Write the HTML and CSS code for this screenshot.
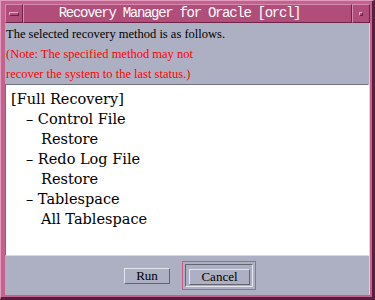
FILE: index.html
```html
<!DOCTYPE html>
<html lang="en">
<head>
  <meta charset="UTF-8">
  <title>Recovery Manager for Oracle [orcl]</title>
  <link rel="stylesheet" href="styles.css">
</head>
<body>
  <div class="window">
    <div class="title-bar">
      <div class="title-btn"><span class="menu-bar"></span></div>
      <div class="title-text">Recovery Manager for Oracle [orcl]</div>
      <div class="title-btn"><span class="max-dot"></span></div>
    </div>

    <div class="window-body">
      <div class="message">
        <p>The selected recovery method is as follows.</p>
        <p class="note">(Note: The specified method may not</p>
        <p class="note">recover the system to the last status.)</p>
      </div>

      <div class="method-panel">
        <div class="tree-line">[Full Recovery]</div>
        <div class="tree-line level-1">– Control File</div>
        <div class="tree-line level-2">Restore</div>
        <div class="tree-line level-1">– Redo Log File</div>
        <div class="tree-line level-2">Restore</div>
        <div class="tree-line level-1">– Tablespace</div>
        <div class="tree-line level-2">All Tablespace</div>
      </div>

      <div class="button-row">
        <button class="btn btn-run">Run</button>
        <div class="focus-ring">
          <div class="default-frame">
            <button class="btn btn-cancel">Cancel</button>
          </div>
        </div>
      </div>
    </div>
  </div>
</body>
</html>
```

FILE: styles.css
```css
* {
  box-sizing: border-box;
  margin: 0;
  padding: 0;
}

body {
  background: #adb0c2;
  font-family: 'Liberation Serif', serif;
}

.window {
  width: 375px;
  height: 300px;
  display: flex;
  flex-direction: column;
  background: #c4628f;
  border: 1px solid;
  border-color: #e29bbd #5a1f3f #5a1f3f #e29bbd;
  padding: 3px 2px 2px 4px;
  border-right-width: 3px;
  border-bottom-width: 3px;
}

/* title bar */
.title-bar {
  display: flex;
  height: 19px;
  background: #b04d79;
}

.title-btn {
  width: 18px;
  height: 19px;
  border: 1px solid;
  border-color: #d98ab0 #6e2448 #6e2448 #d98ab0;
  display: flex;
  align-items: center;
  justify-content: center;
}

.menu-bar {
  width: 10px;
  height: 4px;
  border: 1px solid;
  border-color: #e6a6c4 #6e2448 #6e2448 #e6a6c4;
}

.max-dot {
  width: 4px;
  height: 4px;
  border: 1px solid;
  border-color: #e6a6c4 #6e2448 #6e2448 #e6a6c4;
}

.title-text {
  flex: 1;
  border: 1px solid;
  border-color: #d98ab0 #6e2448 #6e2448 #d98ab0;
  padding-right: 16px;
  color: #ffffff;
  font-family: 'Liberation Mono', monospace;
  font-size: 14px;
  letter-spacing: -1.3px;
  line-height: 17px;
  text-align: center;
}

/* body */
.window-body {
  flex: 1;
  display: flex;
  flex-direction: column;
  background: #adb0c2;
  border-right: 1px solid #d3d5df;
}

.message {
  padding: 1px 0 0 1px;
  font-size: 12.5px;
  line-height: 20px;
  color: #000000;
}

.message .note {
  color: #ff0000;
}

.method-panel {
  height: 172px;
  background: #ffffff;
  border: 1px solid;
  border-color: #70727e #ffffff #d8dae3 #70727e;
  padding: 4px 0 0 5px;
  font-family: 'DejaVu Serif', serif;
  font-size: 14.5px;
  line-height: 20px;
  color: #000000;
}

.tree-line.level-1 {
  padding-left: 15px;
}

.tree-line.level-2 {
  padding-left: 30px;
}

/* buttons */
.button-row {
  flex: 1;
  display: flex;
  align-items: center;
  justify-content: center;
  gap: 12px;
  padding-left: 6px;
}

.btn {
  height: 16px;
  padding: 0;
  background: #adb0c2;
  border: 1px solid;
  border-color: #e4e6ee #62646f #62646f #e4e6ee;
  font-family: 'Liberation Serif', serif;
  font-size: 13px;
  line-height: 14px;
  color: #000000;
}

.btn-run {
  width: 46px;
}

.btn-cancel {
  width: 61px;
}

.focus-ring {
  border: 1px solid #d0568a;
  padding: 2px;
}

.default-frame {
  border: 1px solid;
  border-color: #62646f #e4e6ee #e4e6ee #62646f;
  padding: 2px 2px 1px 3px;
}
```
